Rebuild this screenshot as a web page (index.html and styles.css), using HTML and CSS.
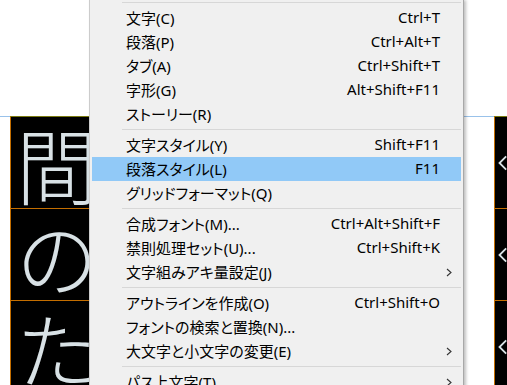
FILE: index.html
```html
<!DOCTYPE html>
<html lang="ja">
<head>
    <meta charset="UTF-8">
    <meta name="viewport" content="width=device-width, initial-scale=1.0">
    <title>Type Menu</title>
    <link rel="stylesheet" href="styles.css">
</head>
<body>
    <div class="canvas">
        <div class="spread">
            <div class="margin-left"></div>
            <div class="frame frame-left">
                <div class="cell"><span class="glyph">間</span></div>
                <div class="cell"><span class="glyph">の</span></div>
                <div class="cell"><span class="glyph">た</span></div>
            </div>
            <div class="gutter"></div>
            <div class="frame frame-right">
                <div class="cell"><svg class="chev" width="12" height="20" viewBox="0 0 12 20"><polyline points="11,2 3,10 11,18"/></svg></div>
                <div class="cell"><svg class="chev" width="12" height="20" viewBox="0 0 12 20"><polyline points="11,2 3,10 11,18"/></svg></div>
                <div class="cell"><svg class="chev" width="12" height="20" viewBox="0 0 12 20"><polyline points="11,2 3,10 11,18"/></svg></div>
            </div>
        </div>

        <!-- popup menu (Type) -->
        <div class="menu">
            <div class="sep"></div>
            <div class="item"><span class="label">文字(C)</span><span class="key">Ctrl+T</span><span class="sub"></span></div>
            <div class="item"><span class="label">段落(P)</span><span class="key">Ctrl+Alt+T</span><span class="sub"></span></div>
            <div class="item"><span class="label">タブ(A)</span><span class="key">Ctrl+Shift+T</span><span class="sub"></span></div>
            <div class="item"><span class="label">字形(G)</span><span class="key">Alt+Shift+F11</span><span class="sub"></span></div>
            <div class="item"><span class="label">ストーリー(R)</span><span class="key"></span><span class="sub"></span></div>
            <div class="sep"></div>
            <div class="item"><span class="label">文字スタイル(Y)</span><span class="key">Shift+F11</span><span class="sub"></span></div>
            <div class="item active"><span class="label">段落スタイル(L)</span><span class="key">F11</span><span class="sub"></span></div>
            <div class="item"><span class="label">グリッドフォーマット(Q)</span><span class="key"></span><span class="sub"></span></div>
            <div class="sep"></div>
            <div class="item"><span class="label">合成フォント(M)...</span><span class="key">Ctrl+Alt+Shift+F</span><span class="sub"></span></div>
            <div class="item"><span class="label">禁則処理セット(U)...</span><span class="key">Ctrl+Shift+K</span><span class="sub"></span></div>
            <div class="item"><span class="label">文字組みアキ量設定(J)</span><span class="key"></span><span class="sub"><svg width="6" height="9" viewBox="0 0 6 9"><polyline points="1,1 5,4.5 1,8"/></svg></span></div>
            <div class="sep"></div>
            <div class="item"><span class="label">アウトラインを作成(O)</span><span class="key">Ctrl+Shift+O</span><span class="sub"></span></div>
            <div class="item"><span class="label">フォントの検索と置換(N)...</span><span class="key"></span><span class="sub"></span></div>
            <div class="item"><span class="label">大文字と小文字の変更(E)</span><span class="key"></span><span class="sub"><svg width="6" height="9" viewBox="0 0 6 9"><polyline points="1,1 5,4.5 1,8"/></svg></span></div>
            <div class="sep"></div>
            <div class="item"><span class="label">パス上文字(T)</span><span class="key"></span><span class="sub"><svg width="6" height="9" viewBox="0 0 6 9"><polyline points="1,1 5,4.5 1,8"/></svg></span></div>
        </div>
    </div>
</body>
</html>
```

FILE: styles.css
```css
html, body {
    margin: 0;
    padding: 0;
    background: #ffffff;
    overflow: hidden;
}

body {
    width: 507px;
    height: 385px;
    font-family: "Noto Sans", "Noto Sans CJK JP", sans-serif;
}

.canvas {
    position: relative;
    width: 507px;
    height: 385px;
    padding-top: 116px;
    box-sizing: border-box;
    overflow: hidden;
}

.spread {
    display: flex;
    border-top: 1px solid #99c2ea;
}

.margin-left {
    width: 10px;
    flex-shrink: 0;
}

.gutter {
    flex: 1;
}

.frame {
    display: flex;
    flex-direction: column;
    background: #000;
    border-left: 1px solid #c46e00;
    margin-top: -1px;
    border-top: 1px solid #7a7a10;
    overflow: hidden;
}

.frame-left {
    width: 110px;
    flex-shrink: 0;
}

.frame-right {
    width: 12px;
    flex-shrink: 0;
}

.cell {
    height: 91px;
    border-bottom: 1px solid #c46e00;
    display: flex;
    align-items: center;
    overflow: hidden;
}

.glyph {
    font-family: "Noto Sans CJK JP", sans-serif;
    font-weight: 300;
    font-size: 82px;
    line-height: 80px;
    color: #d8e1e5;
    margin-left: 5px;
}

.chev {
    margin-left: 2px;
    fill: none;
    stroke: #d8e1e5;
    stroke-width: 2.2;
}

/* menu */
.menu {
    position: absolute;
    left: 89px;
    top: -2px;
    width: 369px;
    padding: 0 2px;
    background: #f0f0f0;
    border: 1px solid #cccccc;
    border-right-color: #a8a8a8;
    box-shadow: 2px 2px 3px rgba(0, 0, 0, 0.25);
    font-size: 15px;
    font-feature-settings: "palt";
    color: #000;
}

.sep {
    height: 7px;
    position: relative;
}

.sep::after {
    content: "";
    position: absolute;
    left: 30px;
    right: 0;
    top: 3px;
    border-top: 1px solid #d7d7d7;
}

.item {
    display: grid;
    grid-template-columns: 1fr auto 21px;
    align-items: center;
    height: 24px;
    box-sizing: border-box;
    padding-left: 34px;
    padding-bottom: 2px;
    white-space: nowrap;
}

.item.active {
    background: #91c9f7;
}

.key {
    text-align: right;
}

.sub {
    display: flex;
    align-items: center;
    padding-left: 6px;
    padding-top: 2px;
}

.sub svg {
    fill: none;
    stroke: #333;
    stroke-width: 1.1;
}
```
